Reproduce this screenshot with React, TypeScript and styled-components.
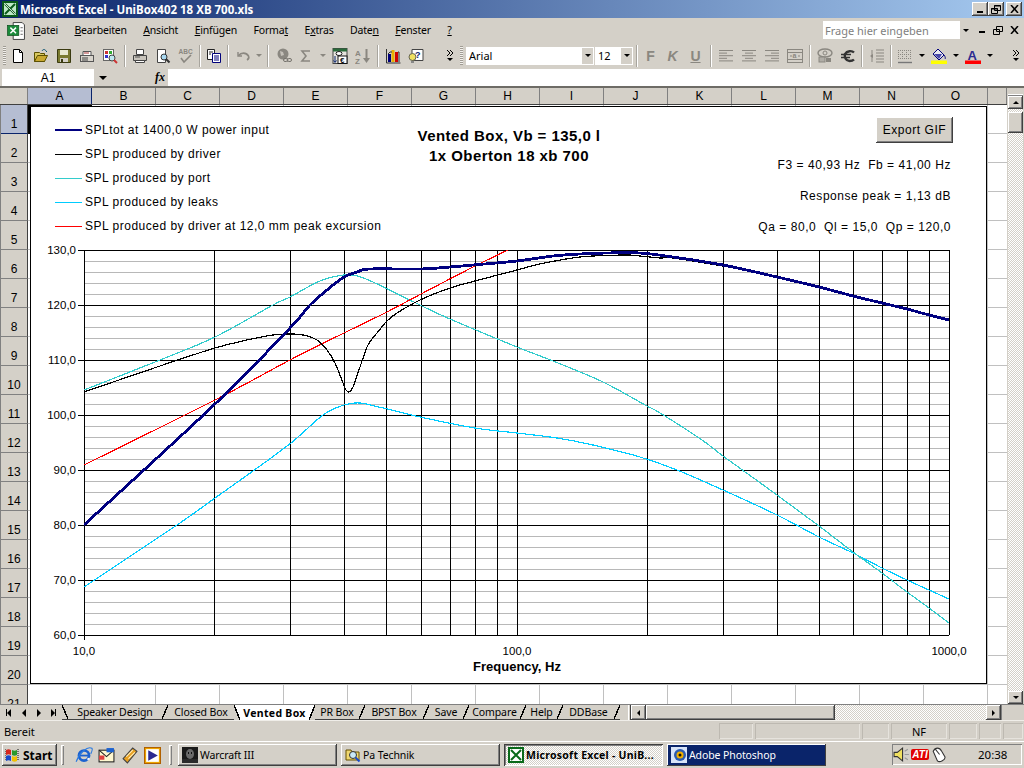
import React from 'react';
import styled, { createGlobalStyle } from 'styled-components';

const GlobalStyle = createGlobalStyle`
  html, body { margin: 0; padding: 0; background: #d4d0c8; }
  body { width: 1024px; height: 768px; overflow: hidden; }
`;

const UI = `"Noto Sans", "Liberation Sans", sans-serif`;
const ARIAL = `"Liberation Sans", Arial, sans-serif`;
const FACE = '#d4d0c8';
const RAISED = `inset -1px -1px #404040, inset 1px 1px #fff, inset -2px -2px #808080, inset 2px 2px ${FACE}`;
const DITHER = `repeating-conic-gradient(#fff 0 25%, ${FACE} 0 50%) 0 0 / 2px 2px`;

const Page = styled.div`
  width: 1024px;
  height: 768px;
  display: flex;
  flex-direction: column;
  overflow: hidden;
  background: ${FACE};
  font-family: ${UI};
  font-size: 11px;
  color: #000;
`;

/* title bar */
const TitleBar = styled.div`
  height: 18px;
  flex: none;
  display: flex;
  align-items: center;
  padding: 0 2px;
  background: linear-gradient(to right, #0a246a, #a6caf0);
  color: #fff;
  font-weight: 700;
  font-size: 11.5px;
`;

const TitleText = styled.span`
  margin-left: 2px;
  flex: 1;
  white-space: nowrap;
`;

const WinButtons = styled.div`
  display: flex;
`;

const WinButton = styled.div<{ $gap?: number }>`
  width: 16px;
  height: 14px;
  margin-left: ${({ $gap }) => $gap ?? 0}px;
  background: ${FACE};
  box-shadow: ${RAISED};
  display: flex;
  align-items: center;
  justify-content: center;
`;

/* menu */
const MenuBar = styled.div`
  height: 26px;
  flex: none;
  display: flex;
  align-items: center;
  padding-left: 7px;
`;

const Menu = styled.div`
  display: flex;
  margin-left: 8px;
  padding-bottom: 2px;
  gap: 16.5px;
  font-size: 10.5px;
  letter-spacing: -0.2px;
  flex: 1;
  white-space: nowrap;
  u { text-underline-offset: 1px; }
`;

const HelpBox = styled.div`
  width: 148px;
  height: 18px;
  margin-bottom: 2px;
  background: #fff;
  display: flex;
  align-items: center;
  justify-content: space-between;
  color: #808080;
  padding-left: 2px;
  box-sizing: border-box;
  margin-right: 3px;
`;

const ComboArrow = styled.div`
  width: 11px;
  height: 100%;
  flex: none;
  background: ${FACE};
  display: flex;
  align-items: center;
  justify-content: center;
`;

const DocButtons = styled.div`
  display: flex;
  width: 50px;
  align-items: center;
  margin-bottom: 2px;
`;

const DocButton = styled.div`
  width: 16px;
  display: flex;
  justify-content: center;
`;

/* toolbar */
const ToolBar = styled.div`
  height: 25px;
  flex: none;
  display: flex;
  align-items: center;
  padding: 0 0 2px 3px;
  box-sizing: border-box;
`;

const Handle = styled.div<{ $ml?: number; $mr?: number }>`
  width: 3px;
  height: 19px;
  flex: none;
  margin-left: ${({ $ml }) => $ml ?? 0}px;
  margin-right: ${({ $mr }) => $mr ?? 0}px;
  background: repeating-linear-gradient(to bottom, #a09c94 0 1px, #f2f0ec 1px 2px);
`;

const Tool = styled.div<{ $w?: number; $off?: boolean }>`
  width: ${({ $w }) => $w ?? 23}px;
  height: 22px;
  flex: none;
  display: flex;
  align-items: center;
  justify-content: center;
  color: ${({ $off }) => ($off ? '#8a8780' : '#000')};
  font-family: ${ARIAL};
  font-weight: 700;
  font-size: 14px;
`;

const ToolSep = styled.div<{ $w: number }>`
  width: ${({ $w }) => $w}px;
  height: 22px;
  flex: none;
  display: flex;
  justify-content: center;
  &::before {
    content: '';
    width: 1px;
    height: 100%;
    background: #a8a59e;
    border-right: 1px solid #fff;
  }
`;

const Spacer = styled.div<{ $w: number }>`
  width: ${({ $w }) => $w}px;
  flex: none;
`;

const Combo = styled.div<{ $w: number }>`
  width: ${({ $w }) => $w}px;
  height: 18px;
  flex: none;
  box-sizing: border-box;
  border: 1px solid #fff;
  background: #fff;
  display: flex;
  align-items: center;
  justify-content: space-between;
  padding-left: 2px;
  font-family: ${UI};
  font-size: 11px;
`;

const Chevron = styled.div`
  width: 14px;
  flex: none;
  display: flex;
  flex-direction: column;
  align-items: center;
  gap: 2px;
  font-size: 0;
`;

/* formula bar */
const FormulaBar = styled.div`
  height: 17px;
  flex: none;
  display: flex;
  align-items: stretch;
`;

const NameBox = styled.div`
  width: 92px;
  margin-left: 2px;
  background: #fff;
  display: flex;
  align-items: center;
  justify-content: center;
  font-family: ${ARIAL};
  font-size: 12px;
`;

const NameArrow = styled.div`
  width: 18px;
  display: flex;
  align-items: center;
  justify-content: center;
`;

const FxLabel = styled.div`
  width: 56px;
  display: flex;
  align-items: center;
  justify-content: flex-end;
  padding-right: 3px;
  box-sizing: border-box;
  font-family: "Liberation Serif", serif;
  font-style: italic;
  font-weight: 700;
  font-size: 12px;
`;

const FormulaInput = styled.div`
  flex: 1;
  background: #fff;
`;

/* sheet */
const Sheet = styled.div`
  height: 618px;
  flex: none;
  display: flex;
  border-top: 2px solid #6e6c66;
  box-sizing: border-box;
`;

const SheetMain = styled.div`
  width: 1007px;
  flex: none;
  display: flex;
  flex-direction: column;
`;

const ColHeaderRow = styled.div`
  height: 17px;
  flex: none;
  display: flex;
  box-sizing: border-box;
  border-bottom: 1px solid #404040;
`;

const HeaderCell = styled.div<{ $w?: number; $active?: boolean }>`
  width: ${({ $w }) => $w ?? 64}px;
  flex: none;
  box-sizing: border-box;
  display: flex;
  align-items: center;
  justify-content: center;
  background: ${({ $active }) => ($active ? '#b5bdd2' : FACE)};
  border-right: 1px solid ${({ $active }) => ($active ? '#0a246a' : '#808080')};
  font-family: ${ARIAL};
  font-size: 12px;
`;

const SheetBody = styled.div`
  flex: 1;
  min-height: 0;
  display: flex;
`;

const RowHeaders = styled.div`
  width: 28px;
  flex: none;
  overflow: hidden;
  box-sizing: border-box;
  border-left: 1px solid #808080;
`;

/* row labels sit at the bottom of the tall rows */
const RowCell = styled.div<{ $active?: boolean }>`
  height: 29px;
  box-sizing: border-box;
  display: flex;
  align-items: flex-end;
  justify-content: center;
  padding-bottom: 2px;
  background: ${({ $active }) => ($active ? '#b5bdd2' : FACE)};
  border-bottom: 1px solid ${({ $active }) => ($active ? '#0a246a' : '#808080')};
  border-right: 1px solid #404040;
  font-family: ${ARIAL};
  font-size: 12px;
`;

const Cells = styled.div`
  flex: 1;
  position: relative;
  background-color: #fff;
  background-image:
    linear-gradient(to right, transparent 63px, #c0c0c0 63px),
    linear-gradient(to bottom, transparent 28px, #c0c0c0 28px);
  background-size: 64px 100%, 100% 29px;
`;

const CellCursor = styled.div`
  position: absolute;
  left: 0;
  top: 0;
  width: 64px;
  height: 29px;
  box-sizing: border-box;
  border: 2px solid #000;
`;

const VScroll = styled.div`
  flex: 1;
  display: flex;
  flex-direction: column;
  padding: 0 1px 0 1px;
  background: ${FACE};
`;

const VSplit = styled.div`
  height: 8px;
  flex: none;
  box-shadow: inset 0 -1px #808080, inset 0 -2px #fff;
`;

const VTrack = styled.div`
  flex: 1;
  padding-top: 3px;
  background: ${DITHER};
`;

const VThumb = styled.div`
  height: 21px;
  background: ${FACE};
  box-shadow: ${RAISED};
`;

const ScrollBtn = styled.div<{ $w?: number; $h?: number }>`
  width: ${({ $w }) => ($w ? `${$w}px` : '100%')};
  height: ${({ $h }) => ($h ? `${$h}px` : '100%')};
  flex: none;
  box-sizing: border-box;
  background: ${FACE};
  box-shadow: ${RAISED};
  display: flex;
  align-items: center;
  justify-content: center;
`;

const Tri = styled.div<{ $dir: 'up' | 'down' | 'left' | 'right'; $s?: number; $off?: boolean }>`
  width: 0;
  height: 0;
  flex: none;
  ${({ $dir, $s = 4, $off }) => {
    const side = `${$s}px solid transparent`;
    const main = `${$s}px solid ${$off ? '#8a8780' : '#000'}`;
    if ($dir === 'up') return `border-left:${side};border-right:${side};border-bottom:${main};`;
    if ($dir === 'down') return `border-left:${side};border-right:${side};border-top:${main};`;
    if ($dir === 'left') return `border-top:${side};border-bottom:${side};border-right:${main};`;
    return `border-top:${side};border-bottom:${side};border-left:${main};`;
  }}
`;

/* embedded chart, floats over the cells */
const Chart = styled.div`
  position: absolute;
  left: 2px;
  top: 1px;
  width: 957px;
  height: 578px;
  box-sizing: border-box;
  border: 1px solid #000;
  background: #fff;
  font-family: ${ARIAL};
  display: flex;
  flex-direction: column;
  overflow: hidden;
`;

const ChartHead = styled.div`
  height: 133px;
  flex: none;
  display: grid;
  grid-template-columns: 354px 200px 1fr;
  padding: 11px 33px 0 24px;
  box-sizing: border-box;
`;

const Legend = styled.div`
  display: flex;
  flex-direction: column;
  font-size: 12px;
  letter-spacing: 0.5px;
`;

const LegendRow = styled.div`
  height: 24px;
  display: flex;
  align-items: center;
  white-space: nowrap;
`;

const Swatch = styled.div<{ $c: string; $h?: number }>`
  width: 27px;
  height: ${({ $h }) => $h ?? 1}px;
  margin-right: 3px;
  background: ${({ $c }) => $c};
  flex: none;
`;

const ChartTitle = styled.div`
  padding-top: 8px;
  text-align: center;
  font-weight: 700;
  font-size: 15px;
  letter-spacing: 0.45px;
  line-height: 20px;
  white-space: nowrap;
`;

const Stats = styled.div`
  display: flex;
  flex-direction: column;
  align-items: flex-end;
  margin-top: -1px;
  font-size: 12px;
  letter-spacing: 0.55px;
  white-space: pre;
`;

const ExportButton = styled.div`
  width: 77px;
  height: 26px;
  flex: none;
  margin-bottom: 6px;
  background: ${FACE};
  box-shadow: ${RAISED};
  display: flex;
  align-items: center;
  justify-content: center;
`;

const StatLine = styled.div`
  height: 31px;
  padding-right: 2px;
  display: flex;
  align-items: center;
`;

const PlotSvg = styled.svg`
  display: block;
  flex: none;
  text { font-family: ${ARIAL}; fill: #000; }
`;

/* sheet tabs */
const TabRow = styled.div`
  height: 16px;
  flex: none;
  display: flex;
  border-top: 1px solid #808080;
  box-sizing: border-box;
`;

const TabNav = styled.div`
  width: 62px;
  flex: none;
  display: flex;
  align-items: center;
`;

const NavBtn = styled.div`
  width: 15px;
  display: flex;
  align-items: center;
  justify-content: center;
  &:first-child { margin-left: 1px; }
`;

const NavBar = styled.div`
  width: 1px;
  height: 7px;
  background: #000;
`;

const Tabs = styled.div`
  width: 566px;
  flex: none;
  display: flex;
  font-size: 10.5px;
  letter-spacing: -0.1px;
  overflow: hidden;
`;

const slash = (dir: string, fill: string) =>
  `linear-gradient(to bottom ${dir}, ${fill} calc(50% - 0.7px), #000 calc(50% - 0.7px), #000 calc(50% + 0.7px), transparent calc(50% + 0.7px))`;

const Tab = styled.div<{ $w: number; $on?: boolean; $pad?: number; $open?: boolean; $bare?: boolean }>`
  position: relative;
  width: ${({ $w }) => $w}px;
  flex: none;
  box-sizing: border-box;
  padding-right: ${({ $pad }) => $pad ?? 6}px;
  display: flex;
  align-items: center;
  justify-content: center;
  white-space: nowrap;
  font-weight: ${({ $on }) => ($on ? 700 : 400)};
  letter-spacing: ${({ $on }) => ($on ? '0.3px' : 'inherit')};
  border-bottom: ${({ $on }) => ($on ? 'none' : '1px solid #404040')};
  background: ${({ $on }) => ($on ? 'linear-gradient(#fff, #fff) center / calc(100% - 12px) 100% no-repeat' : 'none')};
  &::before {
    content: '';
    display: ${({ $on, $open }) => ($on || $open ? 'block' : 'none')};
    position: absolute;
    left: 0;
    top: 0;
    width: 6px;
    height: 100%;
    background: ${({ $on }) => slash('left', $on ? '#fff' : 'transparent')};
  }
  &::after {
    content: '';
    display: ${({ $bare }) => ($bare ? 'none' : 'block')};
    position: absolute;
    right: 0;
    top: 0;
    width: 6px;
    height: 100%;
    background: ${({ $on }) => slash('right', $on ? '#fff' : 'transparent')};
  }
`;

const TabSplit = styled.div`
  width: 3px;
  flex: none;
  box-shadow: inset -1px 0 #404040, inset 1px 0 #fff;
`;

const HScroll = styled.div`
  flex: 1;
  display: flex;
  background: ${DITHER};
`;

const HThumb = styled.div`
  width: 189px;
  flex: none;
  background: ${FACE};
  box-shadow: ${RAISED};
`;

const HTrack = styled.div`
  flex: 1;
`;

const SizeGrip = styled.div`
  width: 23px;
  flex: none;
  background: ${FACE};
  box-shadow: inset 1px 0 #808080;
`;

/* status bar */
const StatusBar = styled.div`
  height: 21px;
  flex: none;
  display: flex;
  align-items: center;
  padding-left: 4px;
  border-top: 1px solid #f0eee9;
  box-sizing: border-box;
`;

const StatusText = styled.div`
  width: 715px;
  flex: none;
`;

const StatusCell = styled.div<{ $w: number }>`
  width: ${({ $w }) => $w}px;
  height: 16px;
  margin-right: 2px;
  flex: none;
  box-sizing: border-box;
  box-shadow: inset 1px 1px #bdb9b1, inset -1px -1px #e6e3dd;
  display: flex;
  align-items: center;
  justify-content: center;
`;

/* taskbar */
const TaskBar = styled.div`
  height: 27px;
  flex: none;
  box-sizing: border-box;
  border-top: 1px solid #fff;
  padding-top: 2px;
  display: flex;
  align-items: flex-start;
  padding-left: 2px;
`;

const StartButton = styled.div`
  width: 55px;
  height: 22px;
  flex: none;
  box-sizing: border-box;
  padding-left: 3px;
  box-shadow: ${RAISED};
  display: flex;
  align-items: center;
  gap: 2px;
  font-weight: 700;
  font-size: 12px;
`;

const TaskSep = styled.div<{ $l: number; $r: number }>`
  width: 3px;
  height: 20px;
  margin: 1px ${({ $r }) => $r}px 0 ${({ $l }) => $l}px;
  flex: none;
  box-shadow: inset 1px 1px #fff, inset -1px -1px #808080;
`;

const Quick = styled.div`
  width: 23px;
  height: 22px;
  flex: none;
  display: flex;
  align-items: center;
  justify-content: center;
`;

const TaskButton = styled.div<{ $state?: 'active' | 'flash' }>`
  width: 159px;
  height: 22px;
  flex: none;
  margin-right: 4px;
  box-sizing: border-box;
  padding-left: 4px;
  display: flex;
  align-items: center;
  gap: 2px;
  white-space: nowrap;
  overflow: hidden;
  font-size: 10.5px;
  letter-spacing: -0.1px;
  ${({ $state }) =>
    $state === 'active'
      ? `background: ${DITHER}; font-weight: 700; letter-spacing: 0.25px; box-shadow: inset 1px 1px #404040, inset -1px -1px #fff, inset 2px 2px #808080;`
      : $state === 'flash'
      ? `background: #0a246a; color: #fff; box-shadow: inset -1px -1px #404040, inset 1px 1px #fff;`
      : `box-shadow: ${RAISED};`}
`;

const Tray = styled.div`
  width: 130px;
  height: 21px;
  margin-left: 62px;
  flex: none;
  box-sizing: border-box;
  box-shadow: inset 1px 1px #808080, inset -1px -1px #fff;
  display: flex;
  align-items: center;
  padding-left: 1px;
`;

const AtiBadge = styled.div`
  width: 18px;
  height: 11px;
  margin: 0 1px;
  background: #e00000;
  color: #fff;
  font: italic 700 10px/11px ${ARIAL};
  text-align: center;
  border-radius: 2px;
  flex: none;
`;

const Clock = styled.div`
  margin-left: 31px;
  font-size: 11.5px;
`;

/* little drawings */
const I = ({ s = 16, children }: { s?: number; children: React.ReactNode }) => (
  <svg width={s} height={s} viewBox="0 0 16 16" style={{ display: 'block', flex: 'none' }}>
    {children}
  </svg>
);

const NewIcon = () => (
  <I><path d="M3.5 1.5h6l3 3v10h-9z" fill="#fff" stroke="#000" /><path d="M9.5 1.5v3h3" fill="none" stroke="#000" /></I>
);
const OpenIcon = () => (
  <I><path d="M1.5 13.5v-9h5l1 1h4v8z" fill="#d8c860" stroke="#5c5000" /><path d="M1.5 13.5l3-6h10l-3 6z" fill="#c8a830" stroke="#5c5000" /><path d="M9 3c1-2 3-2 4 0l1 1" fill="none" stroke="#0a5070" /></I>
);
const SaveIcon = () => (
  <I><path d="M1.5 1.5h13v13h-13z" fill="#7a7a30" stroke="#3a3a10" /><rect x="4" y="2" width="8" height="5" fill="#e8e8d0" /><rect x="4" y="10" width="8" height="4" fill="#d4d0c8" /><rect x="5" y="11" width="2" height="3" fill="#3a3a10" /></I>
);
const MailIcon = () => (
  <I><path d="M4 3.5h8v4H4z" fill="#fff" stroke="#555" /><rect x="1.5" y="7.5" width="13" height="6" fill="#d8d4cc" stroke="#555" /><path d="M3 10h6M3 12h6" stroke="#444" /><path d="M5 5h5" stroke="#a33" /></I>
);
const PermIcon = () => (
  <I><rect x="1.5" y="1.5" width="10" height="11" fill="#fff" stroke="#666" /><rect x="3" y="3" width="3" height="3" fill="#c33" /><rect x="7" y="3" width="3" height="3" fill="#3a3" /><rect x="3" y="7" width="3" height="3" fill="#33c" /><circle cx="10" cy="10" r="3" fill="#bfe8f0" stroke="#444" /><path d="M12 12l3 3" stroke="#c33" strokeWidth="2" /></I>
);
const PrintIcon = () => (
  <I><path d="M4.5 1.5h7v5h-7z" fill="#fff" stroke="#444" /><path d="M1.5 7.5h13v5h-13z" fill="#c8c4bc" stroke="#444" /><path d="M3.5 12.5h9v2h-9z" fill="#fff" stroke="#444" /><path d="M3 9h5" stroke="#555" /></I>
);
const PreviewIcon = () => (
  <I><path d="M2.5 1.5h8v13h-8z" fill="#fff" stroke="#444" /><circle cx="9" cy="9" r="3" fill="#a8d8f0" stroke="#333" /><path d="M11 11l3.5 3.5" stroke="#333" strokeWidth="2" /></I>
);
const SpellIcon = () => (
  <I><text x="0.5" y="6" fontFamily="Liberation Sans" fontSize="6.5" fill="#8a8780">ABC</text><path d="M3 10l3 4 7-7" fill="none" stroke="#8a8780" strokeWidth="1.6" /></I>
);
const CopyIcon = () => (
  <I><path d="M1.5 1.5h7v10h-7z" fill="#fff" stroke="#222" /><path d="M6.5 5.5h8v9h-8z" fill="#fff" stroke="#00007a" /><path d="M8 8h5M8 10h5M8 12h5" stroke="#00007a" /><path d="M3 4h4M3 6h2" stroke="#222" /></I>
);
const UndoIcon = () => (
  <I><path d="M3 4v4h4" fill="none" stroke="#8a8780" strokeWidth="1.4" /><path d="M3.5 7.5C6 4.5 11 4 13.5 8c.5 1 0 3-1.5 4" fill="none" stroke="#8a8780" strokeWidth="1.6" /></I>
);
const LinkIcon = () => (
  <I><circle cx="7" cy="6" r="5.5" fill="#8a8780" /><path d="M4 3l3 1 1 3-3 1z" fill="#c4c0b8" /><rect x="7.5" y="10.5" width="4.5" height="3" rx="1.5" fill="none" stroke="#77746e" /><rect x="11" y="10.5" width="4.5" height="3" rx="1.5" fill="none" stroke="#77746e" /></I>
);
const SigmaIcon = () => (
  <I><path d="M12 3H4l4 5-4 5h8" fill="none" stroke="#8a8780" strokeWidth="1.6" /></I>
);
const CalcIcon = () => (
  <I><rect x="1" y="0.5" width="14" height="15" fill="#e6e4de" stroke="#444" /><rect x="1" y="0.5" width="14" height="3" fill="#2a6a3a" /><ellipse cx="7" cy="5.5" rx="3" ry="2" fill="#fff" stroke="#222" /><rect x="6" y="8" width="9" height="7.5" fill="#fff" stroke="#111" /><text x="8" y="14.5" fontFamily="Liberation Sans" fontWeight="700" fontSize="8" fill="#111">€</text><path d="M3 8v6M1.5 12.5L3 14.5l1.5-2" fill="none" stroke="#0a246a" /></I>
);
const SortIcon = () => (
  <I><text x="0" y="7.5" fontFamily="Liberation Sans" fontWeight="700" fontSize="8" fill="#8a8780">A</text><text x="0" y="15.5" fontFamily="Liberation Sans" fontWeight="700" fontSize="8" fill="#8a8780">Z</text><path d="M11.5 1v11" stroke="#8a8780" strokeWidth="2" /><path d="M8 10h7l-3.5 5z" fill="#8a8780" /></I>
);
const BarsIcon = () => (
  <I><path d="M1.5 1v14h14" fill="none" stroke="#333" /><rect x="3" y="6" width="3" height="8" fill="#00007a" /><rect x="6.5" y="2" width="3" height="12" fill="#e8b000" /><rect x="10" y="4" width="3" height="10" fill="#d00000" /><path d="M3 6l2-2h2M13 4h1v10" fill="none" stroke="#333" /></I>
);
const HelpIcon = () => (
  <I><path d="M4 1.5h11v11H4z" fill="#fff" stroke="#444" /><text x="7" y="10" fontFamily="Liberation Sans" fontWeight="700" fontSize="9" fill="#0a246a">?</text><circle cx="4.5" cy="9" r="3.5" fill="#f0e060" stroke="#665" /><path d="M3 13h3v2H3z" fill="#888" /></I>
);
const AlignIcon = ({ kind }: { kind: 'l' | 'c' | 'r' }) => {
  const rows = [14, 8, 14, 8, 14];
  return (
    <I>
      {rows.map((w, n) => {
        const x = kind === 'l' ? 1 : kind === 'c' ? 8 - w / 2 : 15 - w;
        return <rect key={n} x={x} y={2 + n * 2.6} width={w} height="1" fill="#8a8780" />;
      })}
    </I>
  );
};
const MergeIcon = () => (
  <I><rect x="0.5" y="1.5" width="15" height="13" fill="none" stroke="#8a8780" /><path d="M0.5 4.5h15M0.5 11.5h15" stroke="#8a8780" /><path d="M3 8h2M13 8h-2" stroke="#8a8780" /><text x="5.5" y="10" fontFamily="Liberation Sans" fontSize="7" fill="#8a8780">a</text></I>
);
const CurrencyIcon = () => (
  <I><ellipse cx="8" cy="5" rx="7" ry="4" fill="#d4d0c8" stroke="#8a8780" strokeWidth="1.4" /><circle cx="8" cy="5" r="2" fill="none" stroke="#8a8780" /><rect x="2" y="9" width="6" height="5" fill="#b0ada6" stroke="#8a8780" /><rect x="9" y="10" width="5" height="4" fill="#8a8780" /></I>
);
const EuroIcon = () => (
  <I><path d="M14 4.5C12 2.5 7 2.5 5 6c-1 3 1 7 4.5 7 2 0 3.5-.5 4.5-1.5" fill="none" stroke="#333" strokeWidth="2.4" /><path d="M1 6.5h10M1 9.5h9" stroke="#333" strokeWidth="1.6" /></I>
);
const IndentIcon = () => (
  <I><path d="M7 2h8M7 5h8M7 8h8M7 11h8M7 14h8" stroke="#8a8780" /><path d="M3 2v12" stroke="#8a8780" /><path d="M1 8l3-2v4z" fill="#8a8780" /></I>
);
const BorderIcon = () => (
  <I><path d="M1.5 2v10M5.5 2v10M9.5 2v10M13.5 2v10M1 2.5h14M1 6.5h14M1 10.5h14" stroke="#8a8780" strokeDasharray="1 1" /><path d="M1 14.5h14" stroke="#777" strokeWidth="1.4" /></I>
);
const FillIcon = () => (
  <I><path d="M7 1l6 6-5 5-6-6z" fill="#e8e8f0" stroke="#00007a" /><path d="M3 6h8l-3 5z" fill="#4848a8" /><path d="M13 7c1.5 2 1.5 3.5 1 4" fill="none" stroke="#00007a" /><rect x="0" y="12.5" width="16" height="3.5" fill="#ffff00" /></I>
);
const FontColorIcon = () => (
  <I><text x="2.5" y="11.5" fontFamily="Liberation Sans" fontWeight="700" fontSize="13" fill="#2a2a90">A</text><rect x="0" y="12.5" width="16" height="3.5" fill="#ff0000" /></I>
);
const SheetLogo = () => (
  <I s={18}><path d="M5.5.5h8l2 2v13h-10z" fill="#fff" stroke="#333" strokeWidth=".8" /><rect x=".5" y="3" width="10" height="9" fill="#1a8a3a" stroke="#0a4a1a" strokeWidth=".6" /><path d="M3 5l5 5M8 5l-5 5" stroke="#fff" strokeWidth="1.3" /><path d="M12 5h2M12 8h2M12 11h2" stroke="#888" /></I>
);
const TitleLogo = () => (
  <I s={16}><rect x="0" y="0" width="16" height="16" fill="#0a5a1a" /><rect x="2" y="2" width="12" height="12" fill="#bfe8c8" /><path d="M3 3l10 10M13 3L3 13" stroke="#0a5a1a" strokeWidth="2" /><path d="M3 3l10 10" stroke="#fff" strokeWidth=".8" /></I>
);
const FlagIcon = () => (
  <I s={16}><path d="M1 3c2-1 3-1 5 0v5c-2-1-3-1-5 0z" fill="#d8261c" /><path d="M7 3c2 1 3 1 5 0v5c-2 1-3 1-5 0z" fill="#2a9a2a" /><path d="M1 9c2-1 3-1 5 0v5c-2-1-3-1-5 0z" fill="#1a4ac8" /><path d="M7 9c2 1 3 1 5 0v5c-2 1-3 1-5 0z" fill="#f0c000" /><path d="M0 2v12M13 2v12" stroke="#111" strokeDasharray="1 1" /></I>
);
const IeIcon = () => (
  <I s={18}>
    <circle cx="8" cy="8.5" r="4.5" fill="none" stroke="#1c62d0" strokeWidth="2.4" />
    <path d="M4 8.5h8.500" stroke="#1c62d0" strokeWidth="1.600" />
    <path d="M11 12l2-1" stroke="#fff" strokeWidth="1.500" />
    <path d="M1 14C4 6 11 0 15 2c1 1 0 3-1 5" fill="none" stroke="#2a7ae0" strokeWidth="1" />
  </I>
);
const EnvelopeIcon = () => (
  <I s={17}><rect x="1" y="3" width="14" height="11" fill="#fff8d0" stroke="#222" /><path d="M1 3l7 6 7-6" fill="none" stroke="#222" /><rect x="8" y="1" width="7" height="4" fill="#1c62d0" /><path d="M1 8h5v4H1z" fill="#e04040" /></I>
);
const WinampIcon = () => (
  <I s={17}><path d="M2 11L11 1l4 3-9 11z" fill="#e8a020" stroke="#444" /><path d="M5 9l6-6M7 11l6-6" stroke="#fff0c0" /></I>
);
const PlayerIcon = () => (
  <I s={17}><rect x="0.5" y="0.5" width="15" height="15" fill="#f0a800" stroke="#b06000" /><rect x="2" y="2" width="12" height="12" fill="#fff" /><path d="M4 3l9 5-9 5z" fill="#2a2a90" /></I>
);
const WarcraftThumb = () => (
  <I s={16}><rect width="16" height="16" fill="#1a1a1a" /><ellipse cx="8" cy="7" rx="4" ry="5" fill="#6a6a6a" /><path d="M6 5h1v2H6zM9 5h1v2H9z" fill="#111" /><rect y="12" width="16" height="4" fill="#2a2a2a" /></I>
);
const FolderSearchIcon = () => (
  <I s={16}><path d="M1 13V3h5l1 2h7v8z" fill="#f0d870" stroke="#665000" /><circle cx="8" cy="8" r="3.5" fill="#c8e8f8" stroke="#333" /><path d="M10.5 10.5l4 4" stroke="#1a4ac8" strokeWidth="2" /></I>
);
const ExcelTask = () => (
  <I s={16}><rect width="16" height="16" fill="#0a6a1a" /><rect x="2" y="2" width="12" height="12" fill="#fff" /><path d="M3 3l10 10M13 3L3 13" stroke="#0a6a1a" strokeWidth="2" /></I>
);
const PsIcon = () => (
  <I s={16}><rect width="16" height="16" fill="#d8e4f8" /><circle cx="9" cy="8" r="6" fill="#2a5ab0" /><circle cx="9" cy="8" r="3.5" fill="#f0b000" /><circle cx="9" cy="8" r="1.5" fill="#111" /></I>
);
const SpeakerIcon = () => (
  <I s={17}><path d="M1 6h3l5-4v12l-5-4H1z" fill="#f0e060" stroke="#333" /><path d="M11 5l3-2M11 8h4M11 11l3 2" stroke="#999" /></I>
);
const MouseIcon = () => (
  <I s={17}><path d="M3 5c2-4 6-4 8 0l3 5c1 3-5 6-7 4z" fill="#fff" stroke="#333" /><path d="M5 3l4 5" stroke="#333" /></I>
);

/* chart data in page pixels */
const X0 = 84;
const X1 = 949;
const Y0 = 250;
const Y1 = 635;
const logX = (f: number) => X0 + ((X1 - X0) / 2) * Math.log10(f / 10);

const freqs = [20, 30, 40, 50, 60, 70, 80, 90, 100, 200, 300, 400, 500, 600, 700, 800, 900, 1000];
const yLabels = [130, 120, 110, 100, 90, 80, 70, 60];

const curves: { c: string; w: number; d: number[][] }[] = [
  {
    c: '#00ccff',
    w: 1.2,
    d: [[84, 587], [177, 525], [215, 498], [253, 471], [291, 443], [323, 415], [344, 405], [360, 403], [383, 408], [420, 417], [475, 428], [517, 433], [557, 438], [593, 445], [640, 457], [677, 470], [723, 490], [777, 515], [819, 537], [853, 553], [882, 568], [907, 580], [929, 590], [949, 599]],
  },
  {
    c: '#33cccc',
    w: 1.2,
    d: [[84, 390], [160, 360], [215, 337], [273, 305], [290, 297], [320, 281], [344, 275], [357, 276], [373, 282], [420, 305], [450, 319], [517, 347], [553, 361], [603, 382], [645, 405], [660, 413], [702, 440], [723, 456], [777, 495], [819, 526], [853, 552], [882, 573], [907, 592], [929, 608], [949, 623]],
  },
  {
    c: '#ff0000',
    w: 1.2,
    d: [[84, 465], [215, 400], [290, 360], [344, 333], [387, 312], [421, 294], [475, 266], [508, 250]],
  },
  {
    c: '#000000',
    w: 1.2,
    d: [[84, 392], [160, 366], [215, 348], [247, 340], [273, 335], [290, 334], [303, 335], [317, 340], [327, 350], [335, 363], [343, 383], [346, 390], [349, 392], [353, 387], [360, 367], [368, 345], [377, 333], [387, 321], [397, 313], [420, 300], [450, 288], [475, 281], [517, 270], [540, 264], [580, 257], [623, 255], [640, 256], [660, 258], [673, 258], [723, 266]],
  },
  {
    c: '#000080',
    w: 2.8,
    d: [[84, 525], [215, 404], [290, 328], [310, 305], [327, 290], [344, 277], [357, 272], [370, 269], [420, 269], [450, 267], [473, 265], [517, 261], [553, 256], [580, 254], [607, 253], [640, 253], [673, 257], [723, 265], [777, 277], [819, 287], [853, 296], [882, 303], [907, 309], [929, 315], [949, 320]],
  },
];

// catmull-rom through the read-off points
const toPath = (d: number[][]) => {
  let out = `M${d[0][0]} ${d[0][1]}`;
  for (let n = 0; n < d.length - 1; n++) {
    const a = d[Math.max(n - 1, 0)];
    const b = d[n];
    const c = d[n + 1];
    const e = d[Math.min(n + 2, d.length - 1)];
    const c1 = [b[0] + (c[0] - a[0]) / 6, b[1] + (c[1] - a[1]) / 6];
    const c2 = [c[0] - (e[0] - b[0]) / 6, c[1] - (e[1] - b[1]) / 6];
    out += `C${c1[0].toFixed(1)} ${c1[1].toFixed(1)} ${c2[0].toFixed(1)} ${c2[1].toFixed(1)} ${c[0]} ${c[1]}`;
  }
  return out;
};

const legend = [
  { c: '#000080', h: 2, t: 'SPLtot at 1400,0 W power input' },
  { c: '#000000', h: 1, t: 'SPL produced by driver' },
  { c: '#33cccc', h: 1, t: 'SPL produced by port' },
  { c: '#00ccff', h: 1, t: 'SPL produced by leaks' },
  { c: '#ff0000', h: 1, t: 'SPL produced by driver at 12,0 mm peak excursion' },
];

const columns = 'BCDEFGHIJKLMNO'.split('');
const rows = Array.from({ length: 21 }, (_, n) => n + 1);

const Plot = () => {
  const minor: number[] = [];
  for (let y = Y0; y <= Y1; y += 11) minor.push(y);
  return (
    <PlotSvg width={955} height={443} viewBox="31 240 955 443">
      <g shapeRendering="crispEdges">
        {minor.map((y) => (
          <line key={y} x1={X0} x2={X1} y1={y + 0.5} y2={y + 0.5} stroke="#b8b8b8" />
        ))}
        {yLabels.map((v, n) => (
          <line key={v} x1={X0 - 6} x2={X1} y1={Y0 + n * 55 + 0.5} y2={Y0 + n * 55 + 0.5} stroke="#000" />
        ))}
        <line x1={X0 + 0.5} x2={X0 + 0.5} y1={Y0} y2={Y1 + 5} stroke="#000" />
        {freqs.map((f) => (
          <line key={f} x1={Math.round(logX(f)) + 0.5} x2={Math.round(logX(f)) + 0.5} y1={Y0} y2={Y1} stroke="#000" />
        ))}
        {curves.map((k) => (
          <path key={k.c} d={toPath(k.d)} fill="none" stroke={k.c} strokeWidth={k.w} />
        ))}
      </g>
      {yLabels.map((v, n) => (
        <text key={v} x={76} y={Y0 + n * 55 + 4} textAnchor="end" fontSize="11.5">{`${v},0`}</text>
      ))}
      <text x={84} y={655} textAnchor="middle" fontSize="11.5">10,0</text>
      <text x={517} y={655} textAnchor="middle" fontSize="11.5">100,0</text>
      <text x={949} y={655} textAnchor="middle" fontSize="11.5">1000,0</text>
      <text x={517} y={671} textAnchor="middle" fontSize="13" fontWeight="700">Frequency, Hz</text>
    </PlotSvg>
  );
};

export default function App() {
  return (
    <Page>
      <GlobalStyle />
      <TitleBar>
        <TitleLogo />
        <TitleText>Microsoft Excel - UniBox402 18 XB 700.xls</TitleText>
        <WinButtons>
          <WinButton><svg width="8" height="8"><rect x="1" y="6" width="6" height="2" /></svg></WinButton>
          <WinButton><svg width="10" height="9"><path d="M3.5.5h6v5h-6zM.5 3.5h6v5h-6z" fill={FACE} stroke="#000" /><path d="M3 1h7M0 4h7" stroke="#000" /></svg></WinButton>
          <WinButton $gap={2}><svg width="9" height="8"><path d="M1 0l7 8M8 0L1 8" stroke="#000" strokeWidth="1.5" /></svg></WinButton>
        </WinButtons>
      </TitleBar>

      <MenuBar>
        <SheetLogo />
        <Menu>
          <span><u>D</u>atei</span>
          <span><u>B</u>earbeiten</span>
          <span><u>A</u>nsicht</span>
          <span><u>E</u>infügen</span>
          <span>Forma<u>t</u></span>
          <span>E<u>x</u>tras</span>
          <span>Date<u>n</u></span>
          <span><u>F</u>enster</span>
          <span><u>?</u></span>
        </Menu>
        <HelpBox>
          Frage hier eingeben
          <ComboArrow><Tri $dir="down" $s={3} /></ComboArrow>
        </HelpBox>
        <DocButtons>
          <DocButton><svg width="8" height="8"><rect x="1" y="5" width="6" height="2" /></svg></DocButton>
          <DocButton><svg width="10" height="10"><path d="M3.5 1.5h6v5h-6zM.5 4.5h6v5h-6z" fill={FACE} stroke="#000" /></svg></DocButton>
          <DocButton><svg width="9" height="8"><path d="M1 0l7 8M8 0L1 8" stroke="#000" strokeWidth="1.5" /></svg></DocButton>
        </DocButtons>
      </MenuBar>

      <ToolBar>
        <Handle />
        <Tool><NewIcon /></Tool>
        <Tool><OpenIcon /></Tool>
        <Tool><SaveIcon /></Tool>
        <Tool><MailIcon /></Tool>
        <Tool><PermIcon /></Tool>
        <ToolSep $w={7} />
        <Tool><PrintIcon /></Tool>
        <Tool><PreviewIcon /></Tool>
        <Tool><SpellIcon /></Tool>
        <ToolSep $w={5} />
        <Tool><CopyIcon /></Tool>
        <ToolSep $w={6} />
        <Tool><UndoIcon /></Tool>
        <Tool $w={10}><Tri $dir="down" $s={3} $off /></Tool>
        <ToolSep $w={8} />
        <Tool><LinkIcon /></Tool>
        <Tool $w={22}><SigmaIcon /></Tool>
        <Tool $w={11}><Tri $dir="down" $s={3} $off /></Tool>
        <Tool><CalcIcon /></Tool>
        <Tool><SortIcon /></Tool>
        <ToolSep $w={7} />
        <Tool><BarsIcon /></Tool>
        <Tool><HelpIcon /></Tool>
        <Spacer $w={16} />
        <Chevron>
          <svg width="8" height="6"><path d="M1 0l3 3-3 3M4 0l3 3-3 3" fill="none" stroke="#000" /></svg>
          <Tri $dir="down" $s={3} />
        </Chevron>
        <Handle $ml={3} $mr={3} />
        <Combo $w={128}>
          Arial
          <ComboArrow><Tri $dir="down" $s={3} /></ComboArrow>
        </Combo>
        <Spacer $w={1} />
        <Combo $w={38}>
          12
          <ComboArrow><Tri $dir="down" $s={3} /></ComboArrow>
        </Combo>
        <ToolSep $w={7} />
        <Tool $w={21} $off>F</Tool>
        <Tool $off><i>K</i></Tool>
        <Tool $off><u>U</u></Tool>
        <ToolSep $w={7} />
        <Tool><AlignIcon kind="l" /></Tool>
        <Tool><AlignIcon kind="c" /></Tool>
        <Tool><AlignIcon kind="r" /></Tool>
        <Tool><MergeIcon /></Tool>
        <ToolSep $w={7} />
        <Tool><CurrencyIcon /></Tool>
        <Tool><EuroIcon /></Tool>
        <ToolSep $w={6} />
        <Tool><IndentIcon /></Tool>
        <ToolSep $w={5} />
        <Tool><BorderIcon /></Tool>
        <Tool $w={11}><Tri $dir="down" $s={3} /></Tool>
        <Tool><FillIcon /></Tool>
        <Tool $w={11}><Tri $dir="down" $s={3} /></Tool>
        <Tool><FontColorIcon /></Tool>
        <Tool $w={11}><Tri $dir="down" $s={3} /></Tool>
        <Spacer $w={14} />
        <Chevron>
          <svg width="8" height="6"><path d="M1 0l3 3-3 3M4 0l3 3-3 3" fill="none" stroke="#000" /></svg>
          <Tri $dir="down" $s={3} />
        </Chevron>
      </ToolBar>

      <FormulaBar>
        <NameBox>A1</NameBox>
        <NameArrow><Tri $dir="down" $s={4} /></NameArrow>
        <FxLabel>fx</FxLabel>
        <FormulaInput />
      </FormulaBar>

      <Sheet>
        <SheetMain>
          <ColHeaderRow>
            <HeaderCell $w={28} />
            <HeaderCell $active>A</HeaderCell>
            {columns.map((c) => (
              <HeaderCell key={c}>{c}</HeaderCell>
            ))}
            <HeaderCell $w={19} />
          </ColHeaderRow>
          <SheetBody>
            <RowHeaders>
              {rows.map((r) => (
                <RowCell key={r} $active={r === 1}>{r}</RowCell>
              ))}
            </RowHeaders>
            <Cells>
              <CellCursor />
              <Chart>
                <ChartHead>
                  <Legend>
                    {legend.map((l) => (
                      <LegendRow key={l.t}>
                        <Swatch $c={l.c} $h={l.h} />
                        {l.t}
                      </LegendRow>
                    ))}
                  </Legend>
                  <ChartTitle>
                    Vented Box, Vb = 135,0 l
                    <br />
                    1x Oberton 18 xb 700
                  </ChartTitle>
                  <Stats>
                    <ExportButton>Export GIF</ExportButton>
                    <StatLine>F3 = 40,93 Hz  Fb = 41,00 Hz</StatLine>
                    <StatLine>Response peak = 1,13 dB</StatLine>
                    <StatLine>Qa = 80,0  Ql = 15,0  Qp = 120,0</StatLine>
                  </Stats>
                </ChartHead>
                <Plot />
              </Chart>
            </Cells>
          </SheetBody>
        </SheetMain>
        <VScroll>
          <VSplit />
          <ScrollBtn $h={13}><Tri $dir="up" $s={3} /></ScrollBtn>
          <VTrack><VThumb /></VTrack>
          <ScrollBtn $h={13}><Tri $dir="down" $s={3} /></ScrollBtn>
        </VScroll>
      </Sheet>

      <TabRow>
        <TabNav>
          <NavBtn><NavBar /><Tri $dir="left" $s={4} /></NavBtn>
          <NavBtn><Tri $dir="left" $s={4} /></NavBtn>
          <NavBtn><Tri $dir="right" $s={4} /></NavBtn>
          <NavBtn><Tri $dir="right" $s={4} /><NavBar /></NavBtn>
        </TabNav>
        <Tabs>
          <Tab $w={106} $pad={0} $open>Speaker Design</Tab>
          <Tab $w={66} $pad={0} $bare>Closed Box</Tab>
          <Tab $w={81} $pad={0} $on>Vented Box</Tab>
          <Tab $w={50}>PR Box</Tab>
          <Tab $w={64}>BPST Box</Tab>
          <Tab $w={40}>Save</Tab>
          <Tab $w={57}>Compare</Tab>
          <Tab $w={37}>Help</Tab>
          <Tab $w={57}>DDBase</Tab>
        </Tabs>
        <TabSplit />
        <HScroll>
          <ScrollBtn $w={15}><Tri $dir="left" $s={3} /></ScrollBtn>
          <HThumb />
          <HTrack />
          <ScrollBtn $w={15}><Tri $dir="right" $s={3} /></ScrollBtn>
          <SizeGrip />
        </HScroll>
      </TabRow>

      <StatusBar>
        <StatusText>Bereit</StatusText>
        <StatusCell $w={34} />
        <StatusCell $w={105} />
        <StatusCell $w={27} />
        <StatusCell $w={56}>NF</StatusCell>
        <StatusCell $w={28} />
        <StatusCell $w={22} />
        <StatusCell $w={20} />
      </StatusBar>

      <TaskBar>
        <StartButton><FlagIcon />Start</StartButton>
        <TaskSep $l={4} $r={4} />
        <Spacer $w={4} />
        <Quick><IeIcon /></Quick>
        <Quick><EnvelopeIcon /></Quick>
        <Quick><WinampIcon /></Quick>
        <Quick><PlayerIcon /></Quick>
        <TaskSep $l={5} $r={6} />
        <TaskButton><WarcraftThumb />Warcraft III</TaskButton>
        <TaskButton><FolderSearchIcon />Pa Technik</TaskButton>
        <TaskButton $state="active"><ExcelTask />Microsoft Excel - UniB...</TaskButton>
        <TaskButton $state="flash"><PsIcon />Adobe Photoshop</TaskButton>
        <Tray>
          <SpeakerIcon />
          <AtiBadge>ATI</AtiBadge>
          <MouseIcon />
          <Clock>20:38</Clock>
        </Tray>
      </TaskBar>
    </Page>
  );
}
